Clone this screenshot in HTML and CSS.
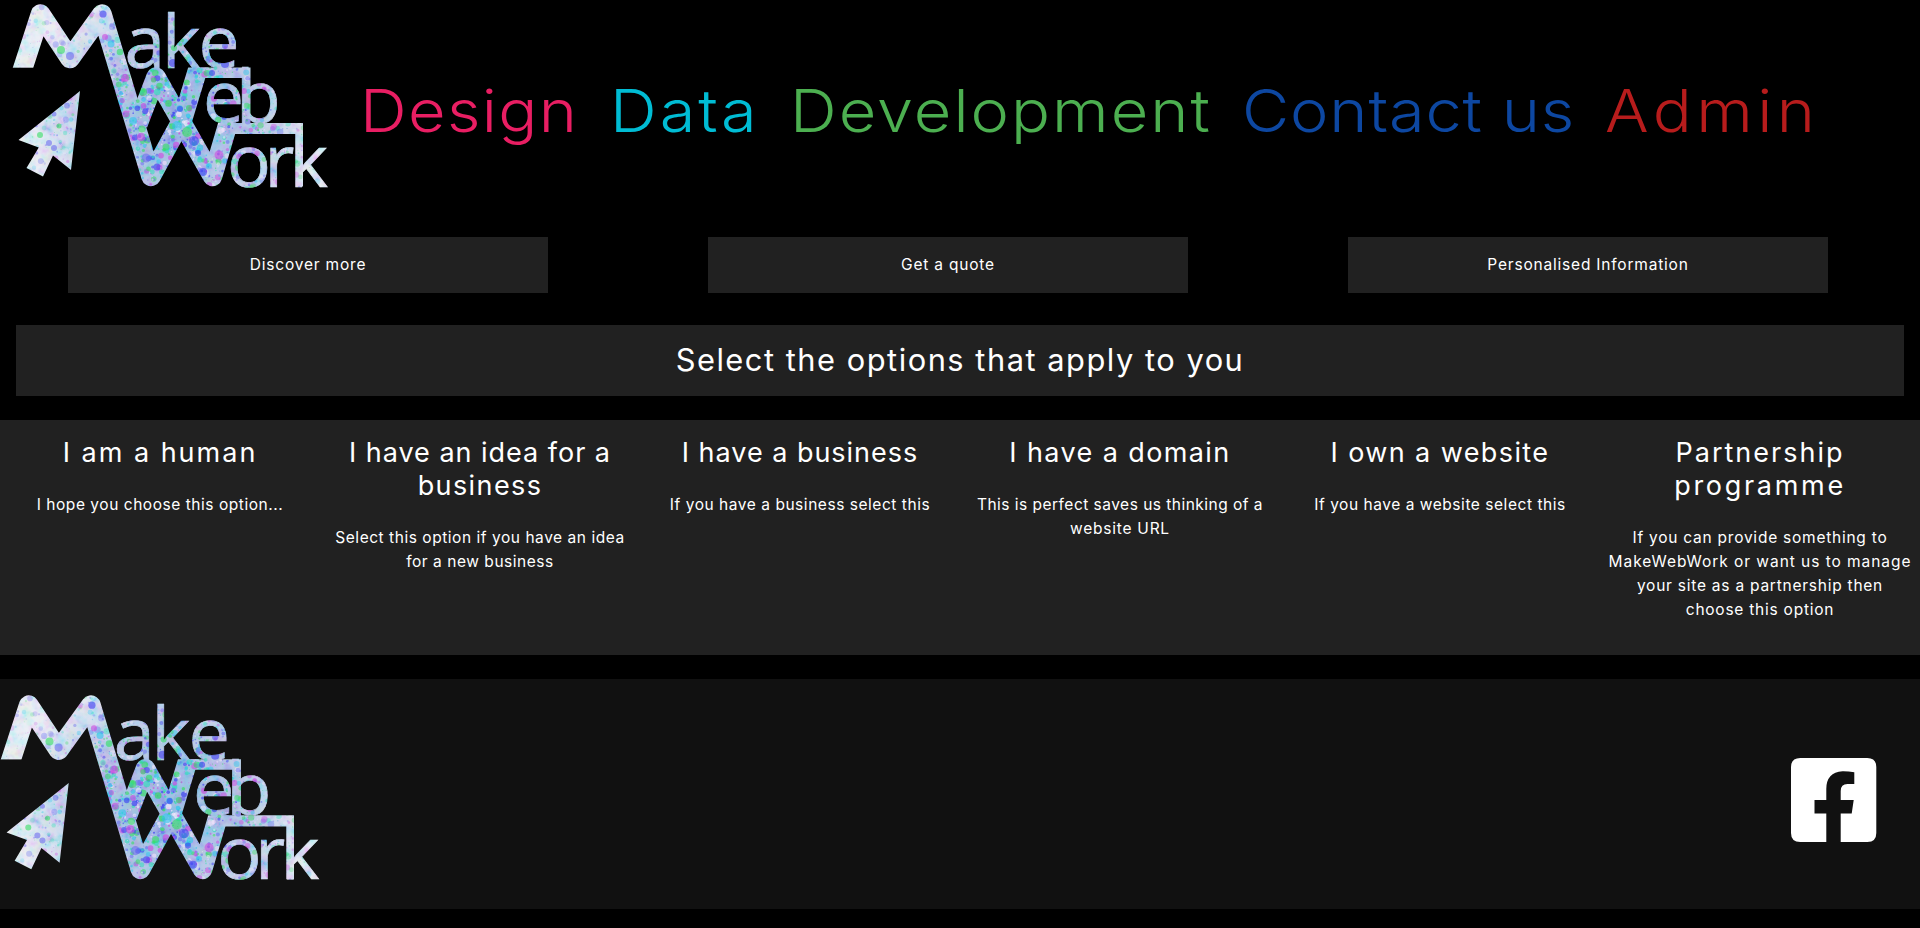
FILE: index.html
```html
<!DOCTYPE html>
<html lang="en">
<head>
<meta charset="utf-8">
<title>MakeWebWork</title>
<link rel="stylesheet" href="styles.css">
</head>
<body>
<svg class="defs" width="0" height="0" aria-hidden="true">
  <defs>
    <radialGradient id="tint" gradientUnits="userSpaceOnUse" cx="178" cy="118" r="150">
      <stop offset="0" stop-color="#76a4dc"/><stop offset=".5" stop-color="#a4b8e0"/><stop offset="1" stop-color="#e4e8f2"/>
    </radialGradient>
    <filter id="clouds" x="0" y="0" width="100%" height="100%">
      <feTurbulence type="fractalNoise" baseFrequency=".09" numOctaves="3" seed="7"/>
      <feColorMatrix values="2.4 0 0 0 -.45  0 2.2 0 0 -.2  0 0 1.2 0 .35  0 0 0 0 1"/>
    </filter>
    <mask id="shape" maskUnits="userSpaceOnUse" x="0" y="0" width="340" height="200">
      <g fill="none" stroke="#fff" stroke-width="19.5" stroke-linejoin="round">
        <path d="M20 77L40.500 14L70 58.500L102 14L151 176.500L183 118L200 62"/>
        <path d="M138 124L156 77L212.500 176.500L230 117"/>
      </g>
      <rect x="0" y="67.700" width="60" height="15" fill="#000"/>
      <rect x="186" y="50" width="30" height="17.500" fill="#000"/>
      <rect x="215" y="105" width="30" height="18" fill="#000"/>
      <path fill="#fff" d="M192 67.500H250.500V123H244V78H192zM221 123H303V186.500H296V134H221z"/>
      <path fill="#fff" d="M80 91L18.500 140L38.700 147.500L26.500 168L43 176.500L53 155.500L71 170z"/>
      <g class="logo-text" fill="#fff" stroke="#fff" stroke-width=".7">
        <text x="124.500 162 198.500" y="68">ake</text>
        <text x="203 236" y="123">eb</text>
        <text x="227 264.500 289.600" y="186.500">ork</text>
      </g>
    </mask>
    <g id="logo">
      <g mask="url(#shape)">
        <rect width="340" height="200" fill="url(#tint)"/>
        <rect width="340" height="200" filter="url(#clouds)" opacity=".28"/>
        <g id="dots"></g>
      </g>
    </g>
  </defs>
</svg>

<header class="top">
  <a class="brand"><svg width="340" height="190" viewBox="0 0 340 190"><use href="#logo"/></svg></a>
  <nav class="menu">
    <a class="design">Design</a>
    <a class="data">Data</a>
    <a class="development">Development</a>
    <a class="contact">Contact us</a>
    <a class="admin">Admin</a>
  </nav>
</header>

<div class="actions">
  <a class="action">Discover more</a>
  <a class="action">Get a quote</a>
  <a class="action">Personalised Information</a>
</div>

<h1 class="banner">Select the options that apply to you</h1>

<section class="options">
  <article><h2><span class="wide">I am a human</span></h2><p><span>I hope you choose this option...</span></p></article>
  <article><h2><span class="tight">I have an idea for a</span><span>business</span></h2><p><span>Select this option if you have an idea</span><span>for a new business</span></p></article>
  <article><h2><span class="tight">I have a business</span></h2><p><span>If you have a business select this</span></p></article>
  <article><h2><span>I have a domain</span></h2><p><span class="tight">This is perfect saves us thinking of a</span><span class="loose">website URL</span></p></article>
  <article><h2><span>I own a website</span></h2><p><span>If you have a website select this</span></p></article>
  <article><h2><span class="wide">Partnership</span><span class="wider">programme</span></h2><p><span class="loose">If you can provide something to</span><span class="wide">MakeWebWork or want us to manage</span><span class="loose">your site as a partnership then</span><span class="loose">choose this option</span></p></article>
</section>

<footer class="bottom">
  <svg width="343.500" height="192" viewBox="12 0 340 190"><use href="#logo"/></svg>
  <a class="social" aria-label="Facebook">
    <svg width="86" height="84" viewBox="0 0 86 84"><path fill="#fff" fill-rule="evenodd" d="M9.300 0H76.300Q85.300 0 85.300 9V75Q85.300 84 76.300 84H49.700V55.500H60.700L62.700 42H49.700V33Q49.700 26 56.500 26H63.300V14.300Q57 13.200 51.500 13.300Q35.300 14.500 35.300 31V42H23.500V55.500H35.300V84H9.300Q0 84 0 75V9Q0 0 9.300 0Z"/></svg>
  </a>
</footer>
<script src="dots.js"></script>
</body>
</html>
```
FILE: styles.css
```css
* { box-sizing: border-box; }
body { margin: 0; background: #000; color: #fff; font-family: Inter, "Open Sans", sans-serif; font-size: 15.5px; }
.defs { display: block; height: 0; }
.logo-text { font-family: "Open Sans", sans-serif; font-size: 73px; }

.top { display: flex; height: 237px; }
.brand { width: 360px; flex: none; }
.menu { display: grid; grid-template-columns: 250px 180px 452.2px 363.1px 1fr; flex: 1; padding-top: 74.5px; font-size: 59px; font-weight: 340; line-height: 72px; white-space: nowrap; }
.menu a { transform: scaleX(1.1); transform-origin: 0 0; justify-self: start; }
.design { color: #e91e63; letter-spacing: 1.2px; }
.data { color: #00bcd4; letter-spacing: 2.7px; }
.development { color: #4caf50; letter-spacing: 1.8px; }
.contact { color: #0d47a1; letter-spacing: .75px; }
.admin { color: #b71c1c; letter-spacing: 4px; }

.actions { display: grid; grid-template-columns: repeat(3, 1fr); }
.action { width: 75%; height: 56px; margin-left: 68px; background: #212121; line-height: 56px; text-align: center; letter-spacing: .8px; }

.banner { margin: 32px 16px 24px; height: 71px; background: #212121; font-size: 30.8px; font-weight: 400; line-height: 70px; letter-spacing: 1.52px; text-align: center; }

.options { display: grid; grid-template-columns: repeat(6, 1fr); height: 235px; padding-top: 16px; background: #212121; text-align: center; white-space: nowrap; }
.options span { display: block; }
.options h2 { margin: 0 0 23.4px; font-size: 27px; font-weight: 400; line-height: 33.4px; letter-spacing: 1.4px; }
.options h2 .tight { letter-spacing: .98px; }
.options h2 .wide { letter-spacing: 2px; }
.options h2 .wider { letter-spacing: 2.7px; }
.options p { margin: 0; line-height: 24px; letter-spacing: .54px; }
.options p .tight { letter-spacing: .48px; }
.options p .loose { letter-spacing: .76px; }
.options p .wide { letter-spacing: .95px; }

.bottom { display: flex; justify-content: space-between; height: 230px; margin-top: 24px; padding: 12px 43px 0 0; background: #111; }
.social { padding-top: 67px; }
```
FILE: dots.js
```js
// Paint speckles for the logo, denser and more saturated towards the middle.
const colors = ['#3d3df2', '#35dd62', '#cf49e0', '#2fc8ec', '#6d6df0', '#2fe0b8', '#f3e6fb'];
let seed = 4217;
function random() {
  seed = (seed * 16807) % 2147483647;
  return seed / 2147483647;
}
function dot(x, y, r, color, opacity) {
  const c = document.createElementNS('http://www.w3.org/2000/svg', 'circle');
  c.setAttribute('cx', x.toFixed(1));
  c.setAttribute('cy', y.toFixed(1));
  c.setAttribute('r', r.toFixed(2));
  c.setAttribute('fill', color);
  c.setAttribute('opacity', opacity.toFixed(2));
  document.getElementById('dots').appendChild(c);
}
for (let i = 0; i < 5200; i++) {
  const x = random() * 335, y = random() * 192;
  const near = Math.max(0, 1 - Math.hypot(x - 178, y - 118) / 150);
  const r = 0.5 + Math.pow(random(), 3) * 2.8;
  const color = colors[Math.floor(random() * colors.length)];
  if (random() < 0.28 + near) dot(x, y, r, color, 0.22 + near * 0.55);
}
[[103, 14, 3.6, 0], [70, 56, 4, 4], [61, 50, 4, 1], [105, 37, 3, 2], [111, 44, 3.5, 3],
 [120, 52, 3.3, 1], [125, 78, 4, 2], [143, 92, 4, 1], [126, 114, 3.5, 2], [133, 121, 4, 3],
 [141, 137, 4.3, 2], [142, 129, 3.6, 1], [177, 126, 5, 3], [187, 132, 5, 1], [194, 141, 5, 0],
 [146, 158, 4.5, 4], [157, 167, 3.5, 0], [166, 147, 3.5, 1], [219, 155, 4.5, 2], [203, 172, 4, 0],
 [180, 109, 3, 0], [189, 108, 3, 1], [198, 153, 3, 0], [49, 143, 3, 4], [54, 148, 3, 4],
 [40, 135, 3, 1], [59, 126, 2.5, 1], [54, 114, 2.5, 4], [212, 73, 3, 0], [225, 64, 4, 0],
 [173, 63, 4, 0], [174, 48, 3, 1]
].forEach(([x, y, r, c]) => dot(x, y, r, colors[c], 0.6));
```
